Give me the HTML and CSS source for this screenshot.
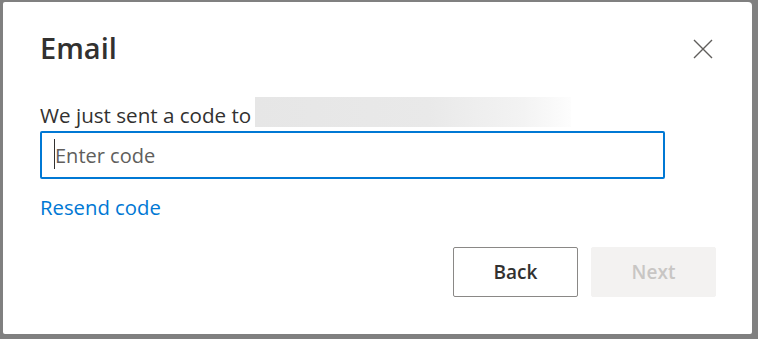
FILE: index.html
```html
<!DOCTYPE html>
<html lang="en">
<head>
  <meta charset="UTF-8">
  <meta name="viewport" content="width=device-width, initial-scale=1.0">
  <title>Email</title>
  <link rel="stylesheet" href="styles.css">
</head>
<body>
  <div class="dialog">
    <div class="dialog-header">
      <h1>Email</h1>
      <button class="close" aria-label="Close">
        <svg width="20" height="20" viewBox="0 0 20 20">
          <path d="M1 1 L19 19 M19 1 L1 19" stroke="#605e5c" stroke-width="1.4" fill="none"/>
        </svg>
      </button>
    </div>

    <div class="sent">
      <span>We just sent a code to</span>
      <span class="hidden-address"></span>
    </div>

    <div class="code-field">
      <input type="text" placeholder="Enter code">
      <span class="caret"></span>
    </div>

    <a href="#" class="resend">Resend code</a>

    <div class="dialog-footer">
      <button class="btn btn-back">Back</button>
      <button class="btn btn-next" disabled>Next</button>
    </div>
  </div>
</body>
</html>
```

FILE: styles.css
```css
html, body {
  height: 100%;
}

body {
  margin: 0;
  background: #808080;
  font-family: 'Open Sans', 'Noto Sans', sans-serif;
  color: #323130;
  overflow: hidden;
}

.dialog {
  box-sizing: border-box;
  width: 749px;
  height: 332px;
  margin: 2px 6px 5px 3px;
  padding: 26px 36px 37px 37px;
  background: #fff;
  border-radius: 2px 4px 2px 2px;
  display: flex;
  flex-direction: column;
}

.dialog-header {
  display: flex;
  align-items: center;
  justify-content: space-between;
  height: 40px;
}

h1 {
  margin: 0;
  font-size: 29px;
  font-weight: 600;
  line-height: 40px;
}

.close {
  width: 20px;
  height: 20px;
  padding: 0;
  margin: 2px 3px 0 0;
  border: none;
  background: none;
  cursor: pointer;
}

.close svg {
  display: block;
}

.sent {
  display: flex;
  align-items: flex-start;
  gap: 4px;
  margin-top: 33px;
  font-size: 20.6px;
  line-height: 28px;
}

.hidden-address {
  width: 316px;
  height: 30px;
  margin-top: -4px;
  background: linear-gradient(to right, #e6e6e6 0%, #e9e9e9 55%, #f3f3f3 85%, #fdfdfd 100%);
}

.code-field {
  position: relative;
  margin-top: 2px;
  width: 625px;
}

.code-field input {
  box-sizing: border-box;
  width: 625px;
  height: 48px;
  padding: 0 13px;
  border: 2px solid #0078d4;
  border-radius: 2px;
  font-family: inherit;
  font-size: 20px;
  color: #323130;
  outline: none;
}

.code-field input::placeholder {
  color: #605e5c;
}

.caret {
  position: absolute;
  left: 14px;
  top: 8px;
  width: 1px;
  height: 30px;
  background: #323130;
}

.resend {
  align-self: flex-start;
  margin-top: 14px;
  font-size: 20.3px;
  line-height: 28px;
  color: #0078d4;
  text-decoration: none;
}

.dialog-footer {
  margin-top: auto;
  display: flex;
  justify-content: flex-end;
  gap: 13px;
}

.btn {
  box-sizing: border-box;
  width: 125px;
  height: 50px;
  border-radius: 2px;
  font-family: inherit;
  font-size: 19px;
  font-weight: 600;
}

.btn-back {
  background: #fff;
  border: 1px solid #8a8886;
  color: #323130;
  cursor: pointer;
}

.btn-next {
  background: #f3f2f1;
  border: 1px solid #f3f2f1;
  color: #c8c6c4;
}
```
